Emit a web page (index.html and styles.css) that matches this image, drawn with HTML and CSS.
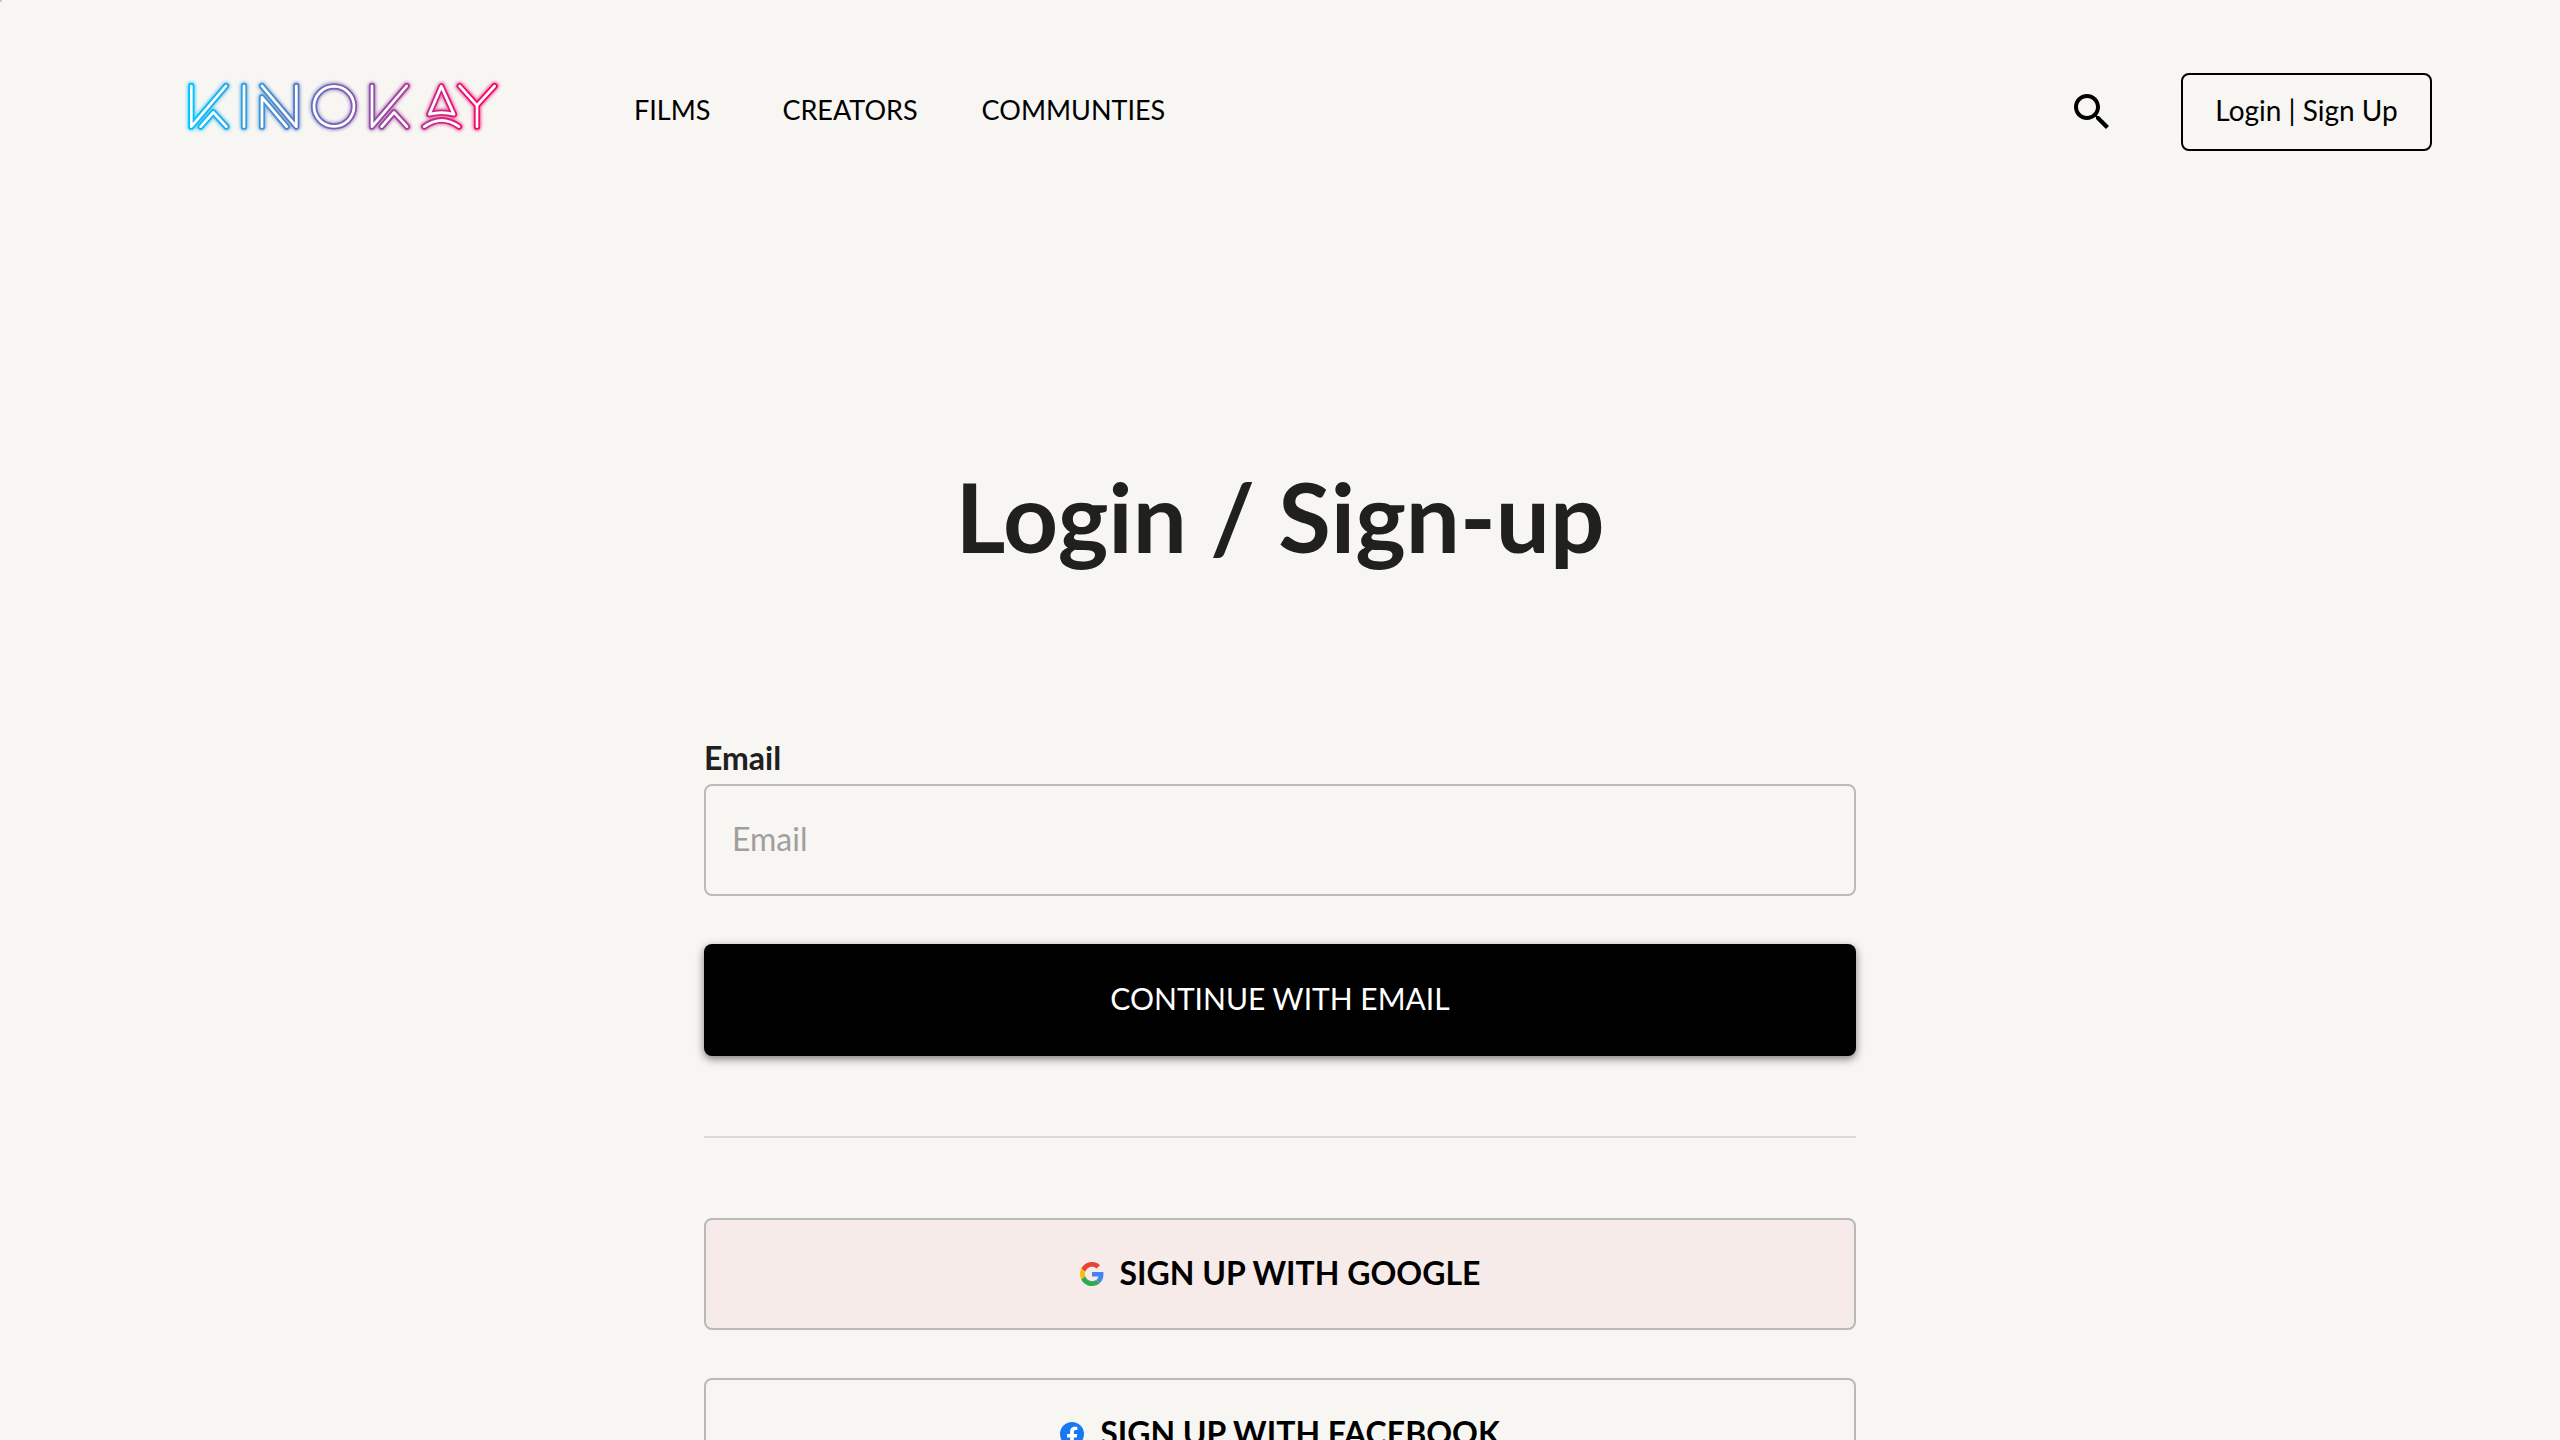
FILE: index.html
```html
<!DOCTYPE html>
<html lang="en">
<head>
<meta charset="utf-8">
<meta name="viewport" content="width=device-width, initial-scale=1">
<title>Kinokay – Login / Sign-up</title>
<link rel="stylesheet" href="styles.css">
</head>
<body>
<span class="corner-mark" aria-hidden="true"></span>
<header class="site-header">
  <a class="logo" href="#" aria-label="Kinokay">
    <svg class="logo-art" viewBox="39 51 960 180" aria-hidden="true">
      <defs>
        <linearGradient id="neon" gradientUnits="userSpaceOnUse" x1="60" y1="0" x2="980" y2="0">
          <stop offset="0" stop-color="#00c4ff"/>
          <stop offset="0.22" stop-color="#4096d6"/>
          <stop offset="0.48" stop-color="#7762b6"/>
          <stop offset="0.68" stop-color="#a5429c"/>
          <stop offset="0.82" stop-color="#d42683"/>
          <stop offset="0.9" stop-color="#f00a6c"/>
          <stop offset="1" stop-color="#f00a6c"/>
        </linearGradient>
        <filter id="glow" filterUnits="userSpaceOnUse" x="30" y="40" width="980" height="200">
          <feGaussianBlur stdDeviation="5"/>
        </filter>
        <g id="letters" fill="none" stroke-linecap="round" stroke-linejoin="round">
          <path d="M64 78V200L168 78M92 200L130 157L169 200"/>
          <path d="M222 78V200"/>
          <path d="M276 78L379 200V78M276 200V112L350 200"/>
          <circle cx="492" cy="139" r="60"/>
          <path d="M606 78V200L710 78M635 200L672 157L711 200"/>
          <path d="M814 79L778 163Q815 153 852 163ZM763 200Q815 162 867 200"/>
          <path d="M869 78L921 136L974 78M921 136V200"/>
        </g>
      </defs>
      <use href="#letters" stroke="url(#neon)" stroke-width="26" opacity="0.55" filter="url(#glow)"/>
      <use href="#letters" stroke="url(#neon)" stroke-width="19"/>
      <use href="#letters" stroke="#fff" stroke-width="8"/>
    </svg>
  </a>
  <nav class="main-nav">
    <a class="nav-link nav-link-films" href="#">FILMS</a>
    <a class="nav-link" href="#">CREATORS</a>
    <a class="nav-link" href="#">COMMUNTIES</a>
  </nav>
  <div class="header-actions">
    <button class="search-button" type="button" aria-label="Search">
      <svg class="search-icon" viewBox="0 0 24 24" aria-hidden="true"><path d="M15.5 14h-.79l-.28-.27C15.41 12.59 16 11.11 16 9.500 16 5.910 13.090 3 9.500 3S3 5.910 3 9.500 5.910 16 9.500 16c1.610 0 3.090-.59 4.230-1.570l.27.28v.79l5 4.990L20.490 19l-4.990-5zm-6 0C7.010 14 5 11.990 5 9.500S7.010 5 9.500 5 14 7.010 14 9.500 11.990 14 9.500 14z"/></svg>
    </button>
    <button class="login-button" type="button">Login | Sign Up</button>
  </div>
</header>
<main class="auth">
  <h1 class="auth-title">Login / Sign-up</h1>
  <form class="auth-form">
    <div class="field">
      <label class="field-label" for="email">Email</label>
      <input class="field-input" id="email" type="email" placeholder="Email">
    </div>
    <button class="button button-primary" type="button">CONTINUE WITH EMAIL</button>
    <hr class="divider">
    <button class="button button-google" type="button">
      <svg class="brand-icon" viewBox="0 0 48 48" aria-hidden="true">
        <path fill="#ea4335" d="M24 9.500c3.540 0 6.710 1.220 9.210 3.600l6.850-6.850C35.900 2.380 30.470 0 24 0 14.620 0 6.510 5.380 2.560 13.220l7.980 6.190C12.430 13.720 17.740 9.500 24 9.500z"/>
        <path fill="#4285f4" d="M46.980 24.550c0-1.570-.15-3.090-.38-4.550H24v9.020h12.940c-.58 2.960-2.260 5.480-4.780 7.180l7.730 6c4.510-4.180 7.090-10.360 7.090-17.650z"/>
        <path fill="#fbbc05" d="M10.530 28.590c-.48-1.450-.76-2.990-.76-4.590s.27-3.140.76-4.590l-7.980-6.190C.92 16.460 0 20.120 0 24s.92 7.540 2.560 10.780l7.970-6.190z"/>
        <path fill="#34a853" d="M24 48c6.480 0 11.930-2.130 15.890-5.810l-7.730-6c-2.150 1.450-4.920 2.300-8.160 2.300-6.260 0-11.570-4.220-13.470-9.910l-7.980 6.190C6.510 42.620 14.620 48 24 48z"/>
      </svg>
      SIGN UP WITH GOOGLE
    </button>
    <button class="button button-facebook" type="button">
      <svg class="brand-icon" viewBox="0 0 24 24" aria-hidden="true">
        <circle cx="12" cy="12" r="12" fill="#1877f2"/>
        <path fill="#fff" d="M16.670 15.470L17.200 12h-3.330V9.750c0-.95.47-1.870 1.960-1.870h1.510V4.920s-1.370-.23-2.690-.23c-2.740 0-4.530 1.660-4.530 4.670V12H7.080v3.470h3.040V24h3.750v-8.530z"/>
      </svg>
      SIGN UP WITH FACEBOOK
    </button>
  </form>
</main>
</body>
</html>
```
FILE: styles.css
```css
* {
  box-sizing: border-box;
}

body {
  margin: 0;
  background: #f7f6f2;
  color: #20201e;
  font-family: Lato, "Liberation Sans", sans-serif;
  font-size: 32px;
}

button,
input {
  margin: 0;
  font: inherit;
}

button {
  cursor: pointer;
}

.corner-mark {
  position: absolute;
  top: 0;
  left: 0;
  width: 2px;
  height: 2px;
  background: #c8c7c4;
}

.site-header {
  display: flex;
  align-items: center;
  height: 224px;
  padding: 0 128px 0 183px;
}

.logo {
  display: flex;
  margin-bottom: 10px;
}

.logo-art {
  width: 320px;
  height: 60px;
}

.main-nav {
  display: flex;
  gap: 64px;
  margin-left: 131px;
  padding-bottom: 4px;
}

.nav-link {
  color: #000;
  font-size: 27px;
  line-height: 40px;
  text-decoration: none;
}

.nav-link-films {
  margin-right: 8px;
}

.header-actions {
  display: flex;
  align-items: center;
  gap: 65px;
  margin-left: auto;
}

.search-button {
  display: flex;
  padding: 0;
  border: 0;
  background: none;
}

.search-icon {
  width: 48px;
  height: 48px;
}

.login-button {
  height: 78px;
  min-width: 251px;
  padding: 0 24px 4px;
  border: 2px solid #000;
  border-radius: 8px;
  background: none;
  color: #000;
  font-size: 28px;
}

.auth {
  width: 45%;
  min-width: 600px;
  margin: 0 auto;
  padding: 236px 0 80px;
}

.auth-title {
  margin: 0 0 164px;
  font-size: 96px;
  font-weight: 700;
  line-height: 112px;
  text-align: center;
}

.auth-form {
  display: flex;
  flex-direction: column;
  gap: 48px;
}

.field {
  display: flex;
  flex-direction: column;
}

.field-label {
  padding-bottom: 4px;
  font-weight: 700;
  line-height: 44px;
}

.field-input {
  width: 100%;
  height: 112px;
  padding: 0 26px 4px;
  border: 2px solid #bbbab7;
  border-radius: 8px;
  background: none;
  color: inherit;
}

.field-input::placeholder {
  color: #a09f9c;
  opacity: 1;
}

.button {
  display: flex;
  align-items: center;
  justify-content: center;
  gap: 16px;
  height: 112px;
  padding: 0 24px 4px;
  border: 2px solid #b9b8ba;
  border-radius: 8px;
  background: none;
  color: #000;
  font-weight: 700;
}

.button-primary {
  border: 0;
  background: #000;
  color: #fff;
  font-size: 30px;
  font-weight: 400;
  box-shadow: 0 3px 8px rgba(0, 0, 0, 0.5);
}

.button-google {
  background: #f7ebe9;
}

.divider {
  width: 100%;
  margin: 32px 0;
  border: 0;
  border-top: 2px solid #dad9d5;
}

.brand-icon {
  width: 24px;
  height: 24px;
  margin-top: 4px;
}
```
